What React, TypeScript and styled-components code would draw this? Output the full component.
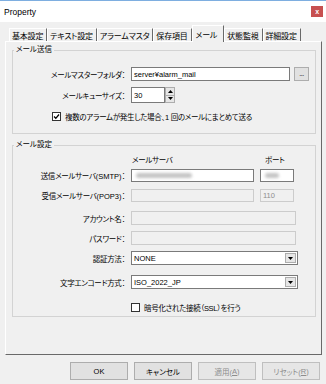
import React from 'react';
import styled, { createGlobalStyle } from 'styled-components';

const GlobalStyle = createGlobalStyle`
  html, body {
    margin: 0;
    padding: 0;
    background: #f0f0f0;
  }
  * { box-sizing: border-box; }
`;

const font = `"Liberation Sans", "Noto Sans CJK JP", sans-serif`;

const Window = styled.div`
  width: 326px;
  height: 384px;
  background: #f0f0f0;
  border-top: 1px solid #7eaee0;
  display: flex;
  flex-direction: column;
  font-family: ${font};
  font-size: 7.5px;
  letter-spacing: -0.3px;
  font-feature-settings: "palt";
  color: #000;
  overflow: hidden;
`;

const TitleBar = styled.div`
  height: 21px;
  background: #fff;
  display: flex;
  align-items: center;
  justify-content: space-between;
  padding: 0 3px 0 4px;
`;

const Title = styled.span`
  font-size: 8.5px;
  letter-spacing: 0;
`;

const CloseButton = styled.div`
  width: 12px;
  height: 11px;
  background: #c75050;
  color: #fff;
  font-size: 7px;
  font-weight: bold;
  display: flex;
  align-items: center;
  justify-content: center;
  line-height: 1;
`;

const Body = styled.div`
  flex: 1;
  display: flex;
  flex-direction: column;
  padding: 3px 4px 0 5px;
`;

const TabStrip = styled.div`
  display: flex;
  align-items: flex-end;
  height: 16px;
  padding-left: 4px;
`;

const Tab = styled.div<{ $active?: boolean }>`
  flex: none;
  height: ${(p) => (p.$active ? 17 : 13)}px;
  margin-bottom: ${(p) => (p.$active ? -1 : 0)}px;
  padding: ${(p) => (p.$active ? '0 6px 0 3px' : '0 3px 0 2px')};
  display: flex;
  align-items: center;
  border-left: 1px solid #fff;
  border-top: 1px solid #fff;
  border-right: 1px solid #696969;
  background: #f0f0f0;
  white-space: nowrap;
  font-size: 8px;
  letter-spacing: -0.2px;
  position: relative;
  z-index: ${(p) => (p.$active ? 1 : 0)};
`;

const TabPanel = styled.div`
  height: 314px;
  border-left: 1px solid #fff;
  border-top: 1px solid #fff;
  border-right: 1px solid #696969;
  border-bottom: 1px solid #696969;
  padding: 2px 5px 0 6px;
  display: flex;
  flex-direction: column;
  gap: 5px;
`;

const Group = styled.fieldset<{ $height: number }>`
  margin: 0;
  min-width: 0;
  height: ${(p) => p.$height}px;
  border: 1px solid #d3d3d3;
  padding: 0 6px 0 0;
  display: flex;
  flex-direction: column;
`;

const Legend = styled.legend`
  padding: 0 2px;
  margin-left: 1px;
  line-height: 12px;
  letter-spacing: 0;
`;

const FormRow = styled.div<{ $mt: number }>`
  display: grid;
  grid-template-columns: 112px 1fr;
  column-gap: 6px;
  align-items: center;
  margin-top: ${(p) => p.$mt}px;
`;

const Label = styled.span`
  text-align: right;
  white-space: nowrap;
`;

const Latin = styled.span`
  letter-spacing: 0;
`;

const Field = styled.div<{ $gap?: number }>`
  display: flex;
  align-items: center;
  gap: ${(p) => p.$gap ?? 4}px;
`;

const Input = styled.div<{ $width?: number; $disabled?: boolean; $h?: number }>`
  width: ${(p) => (p.$width ? `${p.$width}px` : 'auto')};
  flex: ${(p) => (p.$width ? 'none' : 1)};
  height: ${(p) => p.$h ?? 13}px;
  border: 1px solid ${(p) => (p.$disabled ? '#cccccc' : '#7a7a7a')};
  background: ${(p) => (p.$disabled ? '#f0f0f0' : '#fff')};
  color: ${(p) => (p.$disabled ? '#8d8d8d' : '#000')};
  display: flex;
  align-items: center;
  padding-left: 2px;
  letter-spacing: 0;
  white-space: nowrap;
  overflow: hidden;
`;

const Blurred = styled.span<{ $w: number }>`
  display: inline-block;
  width: ${(p) => p.$w}px;
  height: 5px;
  margin-left: 2px;
  border-radius: 3px;
  background: #c4c4c4;
  filter: blur(1.6px);
`;

const SmallButton = styled.div`
  width: 15px;
  height: 14px;
  border: 1px solid #adadad;
  background: #e1e1e1;
  display: flex;
  align-items: flex-end;
  justify-content: center;
  padding-bottom: 3px;
  font-size: 7px;
  line-height: 1;
  letter-spacing: -0.5px;
`;

const Spin = styled.div`
  display: flex;
  flex-direction: column;
  height: 16px;
  width: 10px;
`;

const SpinPart = styled.div`
  flex: 1;
  border: 1px solid #adadad;
  background: #e6e6e6;
  display: flex;
  align-items: center;
  justify-content: center;
  & + & { border-top: none; }
`;

const Combo = styled.div<{ $width: number }>`
  width: ${(p) => p.$width}px;
  height: 14px;
  border: 1px solid #7a7a7a;
  background: #fff;
  display: flex;
  align-items: stretch;
  letter-spacing: 0;
`;

const ComboText = styled.span`
  flex: 1;
  padding-left: 2px;
  display: flex;
  align-items: center;
`;

const ComboArrow = styled.div`
  width: 11px;
  margin: 1px;
  border: 1px solid #adadad;
  background: #e6e6e6;
  display: flex;
  align-items: center;
  justify-content: center;
`;

const CheckRow = styled.div<{ $ml: number; $mt: number }>`
  display: flex;
  align-items: center;
  gap: 4px;
  margin-left: ${(p) => p.$ml}px;
  margin-top: ${(p) => p.$mt}px;
  white-space: nowrap;
`;

const CheckBox = styled.div`
  width: 9px;
  height: 9px;
  border: 1px solid #333;
  background: #fff;
  display: flex;
  align-items: center;
  justify-content: center;
`;

const ColumnHeads = styled.div`
  display: flex;
  margin-top: 3px;
  padding-left: 119px;
`;

const Head = styled.span<{ $width: number }>`
  width: ${(p) => p.$width}px;
  flex: none;
`;

const ButtonBar = styled.div`
  display: flex;
  justify-content: flex-end;
  gap: 6px;
  padding: 7px 2px 0 0;
`;

const Button = styled.div<{ $disabled?: boolean }>`
  width: 58px;
  height: 18px;
  border: 1px solid ${(p) => (p.$disabled ? '#bfbfbf' : '#adadad')};
  background: ${(p) => (p.$disabled ? '#e6e6e6' : '#e1e1e1')};
  color: ${(p) => (p.$disabled ? '#8d8d8d' : '#000')};
  display: flex;
  align-items: center;
  justify-content: center;
  letter-spacing: 0;
`;

const Under = styled.span`
  text-decoration: underline;
`;

const Triangle = ({ up }: { up?: boolean }) => (
  <svg width="5" height="3" viewBox="0 0 5 3">
    <path d={up ? 'M0 3 L2.5 0 L5 3 Z' : 'M0 0 L5 0 L2.5 3 Z'} fill="#000" />
  </svg>
);

const Check = () => (
  <svg width="7" height="7" viewBox="0 0 7 7">
    <path d="M1 3.5 L2.8 5.3 L6 1.5" stroke="#000" strokeWidth="1.3" fill="none" />
  </svg>
);

const tabs = ['基本設定', 'テキスト設定', 'アラームマスタ', '保存項目', 'メール', '状態監視', '詳細設定'];

export default function App() {
  return (
    <>
      <GlobalStyle />
      <Window>
        <TitleBar>
          <Title>Property</Title>
          <CloseButton>x</CloseButton>
        </TitleBar>
        <Body>
          <TabStrip>
            {tabs.map((t) => (
              <Tab key={t} $active={t === 'メール'}>
                {t}
              </Tab>
            ))}
          </TabStrip>
          <TabPanel>
            <Group $height={90}>
              <Legend>メール送信</Legend>
              <FormRow $mt={11}>
                <Label>メールマスターフォルダ：</Label>
                <Field>
                  <Input $h={14}>server¥alarm_mail</Input>
                  <SmallButton>...</SmallButton>
                </Field>
              </FormRow>
              <FormRow $mt={6}>
                <Label>メールキューサイズ：</Label>
                <Field $gap={0}>
                  <Input $width={34} $h={16}>30</Input>
                  <Spin>
                    <SpinPart><Triangle up /></SpinPart>
                    <SpinPart><Triangle /></SpinPart>
                  </Spin>
                </Field>
              </FormRow>
              <CheckRow $ml={39} $mt={8}>
                <CheckBox><Check /></CheckBox>
                複数のアラームが発生した場合、1 回のメールにまとめて送る
              </CheckRow>
            </Group>
            <Group $height={178}>
              <Legend>メール設定</Legend>
              <ColumnHeads>
                <Head $width={133}>メールサーバ</Head>
                <Head $width={30}>ポート</Head>
              </ColumnHeads>
              <FormRow $mt={4}>
                <Label>送信メールサーバ<Latin>(SMTP)</Latin>：</Label>
                <Field $gap={6}>
                  <Input $width={123}><Blurred $w={56} /></Input>
                  <Input $width={34}><Blurred $w={14} /></Input>
                </Field>
              </FormRow>
              <FormRow $mt={7}>
                <Label>受信メールサーバ<Latin>(POP3)</Latin>：</Label>
                <Field $gap={6}>
                  <Input $width={123} $disabled />
                  <Input $width={34} $disabled>110</Input>
                </Field>
              </FormRow>
              <FormRow $mt={9}>
                <Label>アカウント名：</Label>
                <Field>
                  <Input $width={165} $disabled $h={14} />
                </Field>
              </FormRow>
              <FormRow $mt={6}>
                <Label>パスワード：</Label>
                <Field>
                  <Input $width={165} $disabled $h={14} />
                </Field>
              </FormRow>
              <FormRow $mt={6}>
                <Label>認証方法：</Label>
                <Field>
                  <Combo $width={167}>
                    <ComboText>NONE</ComboText>
                    <ComboArrow><Triangle /></ComboArrow>
                  </Combo>
                </Field>
              </FormRow>
              <FormRow $mt={10}>
                <Label>文字エンコード方式：</Label>
                <Field>
                  <Combo $width={167}>
                    <ComboText>ISO_2022_JP</ComboText>
                    <ComboArrow><Triangle /></ComboArrow>
                  </Combo>
                </Field>
              </FormRow>
              <CheckRow $ml={118} $mt={13}>
                <CheckBox />
                暗号化された接続（SSL）を行う
              </CheckRow>
            </Group>
          </TabPanel>
          <ButtonBar>
            <Button>OK</Button>
            <Button>キャンセル</Button>
            <Button $disabled>適用(<Under>A</Under>)</Button>
            <Button $disabled>リセット(<Under>R</Under>)</Button>
          </ButtonBar>
        </Body>
      </Window>
    </>
  );
}
